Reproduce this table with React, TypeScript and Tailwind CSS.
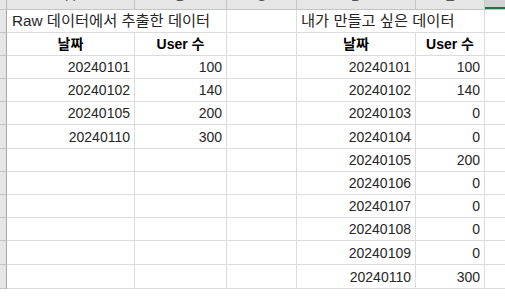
import React from "react";

const rowHeights = [
  "h-[23px]",
  "h-[23px]",
  "h-[23px]",
  "h-[23px]",
  "h-[23px]",
  "h-[24px]",
  "h-[23px]",
  "h-[23px]",
  "h-[23px]",
  "h-[23px]",
  "h-[24px]",
  "h-[24px]",
];

const leftData: [string, string][] = [
  ["20240101", "100"],
  ["20240102", "140"],
  ["20240105", "200"],
  ["20240110", "300"],
];

const rightData: [string, string][] = [
  ["20240101", "100"],
  ["20240102", "140"],
  ["20240103", "0"],
  ["20240104", "0"],
  ["20240105", "200"],
  ["20240106", "0"],
  ["20240107", "0"],
  ["20240108", "0"],
  ["20240109", "0"],
  ["20240110", "300"],
];

function Cell({
  w,
  children,
  align = "right",
  bold = false,
}: {
  w: string;
  children?: React.ReactNode;
  align?: "left" | "right" | "center";
  bold?: boolean;
}) {
  const justify =
    align === "left"
      ? "justify-start pl-[4px]"
      : align === "center"
      ? "justify-center"
      : "justify-end pr-[4px]";
  return (
    <div
      className={`${w} shrink-0 h-full flex items-center whitespace-nowrap border-r border-b border-[#dcdcdc] ${justify} ${
        bold ? "font-bold text-black" : "text-[#262626]"
      }`}
    >
      {children}
    </div>
  );
}

const headerCols: [string, string][] = [
  ["A", "w-[128px]"],
  ["B", "w-[92px]"],
  ["C", "w-[70px]"],
  ["D", "w-[119px]"],
  ["E", "w-[69px]"],
];

export default function App() {
  return (
    <div className="w-[505px] h-[299px] overflow-hidden bg-white text-[14px] leading-none font-['Liberation_Sans','Noto_Sans_CJK_KR',sans-serif]">
      {/* column header */}
      <div className="flex h-[10px] bg-[#e6e6e6] border-b border-[#c4c4c4] overflow-hidden text-[#555] text-[14px]">
        <div className="w-[7px] shrink-0 border-r border-[#b4b4b4]" />
        {headerCols.map(([l, w]) => (
          <div
            key={l}
            className={`${w} shrink-0 border-r border-[#c4c4c4] flex justify-center items-end`}
          >
            <span className="mb-[6px] leading-none">{l}</span>
          </div>
        ))}
        <div className="flex-1 bg-[#d2d2d2] border-b-2 border-[#217346]" />
      </div>

      {rowHeights.map((h, i) => {
        const r = i + 1;
        const left = r >= 3 && r <= 6 ? leftData[r - 3] : null;
        const right = r >= 3 ? rightData[r - 3] : null;
        return (
          <div key={r} className={`${h} flex`}>
            <div className="w-[7px] shrink-0 h-full bg-[#e6e6e6] border-r border-b border-r-[#a8a8a8] border-b-[#c4c4c4]" />
            {r === 1 ? (
              <>
                <Cell w="w-[220px]" align="left">
                  <span className="pl-[1px] text-[15.3px]">Raw 데이터에서 추출한 데이터</span>
                </Cell>
                <Cell w="w-[70px]" />
                <Cell w="w-[188px]" align="left">
                  <span className="text-[15.3px]">내가 만들고 싶은 데이터</span>
                </Cell>
              </>
            ) : r === 2 ? (
              <>
                <Cell w="w-[128px]" align="center" bold>
                  날짜
                </Cell>
                <Cell w="w-[92px]" align="center" bold>
                  User 수
                </Cell>
                <Cell w="w-[70px]" />
                <Cell w="w-[119px]" align="center" bold>
                  날짜
                </Cell>
                <Cell w="w-[69px]" align="center" bold>
                  User 수
                </Cell>
              </>
            ) : (
              <>
                <Cell w="w-[128px]">{left ? left[0] : null}</Cell>
                <Cell w="w-[92px]">{left ? left[1] : null}</Cell>
                <Cell w="w-[70px]" />
                <Cell w="w-[119px]">{right ? right[0] : null}</Cell>
                <Cell w="w-[69px]">{right ? right[1] : null}</Cell>
              </>
            )}
            <div className="flex-1 h-full border-b border-[#dcdcdc]" />
          </div>
        );
      })}
    </div>
  );
}
